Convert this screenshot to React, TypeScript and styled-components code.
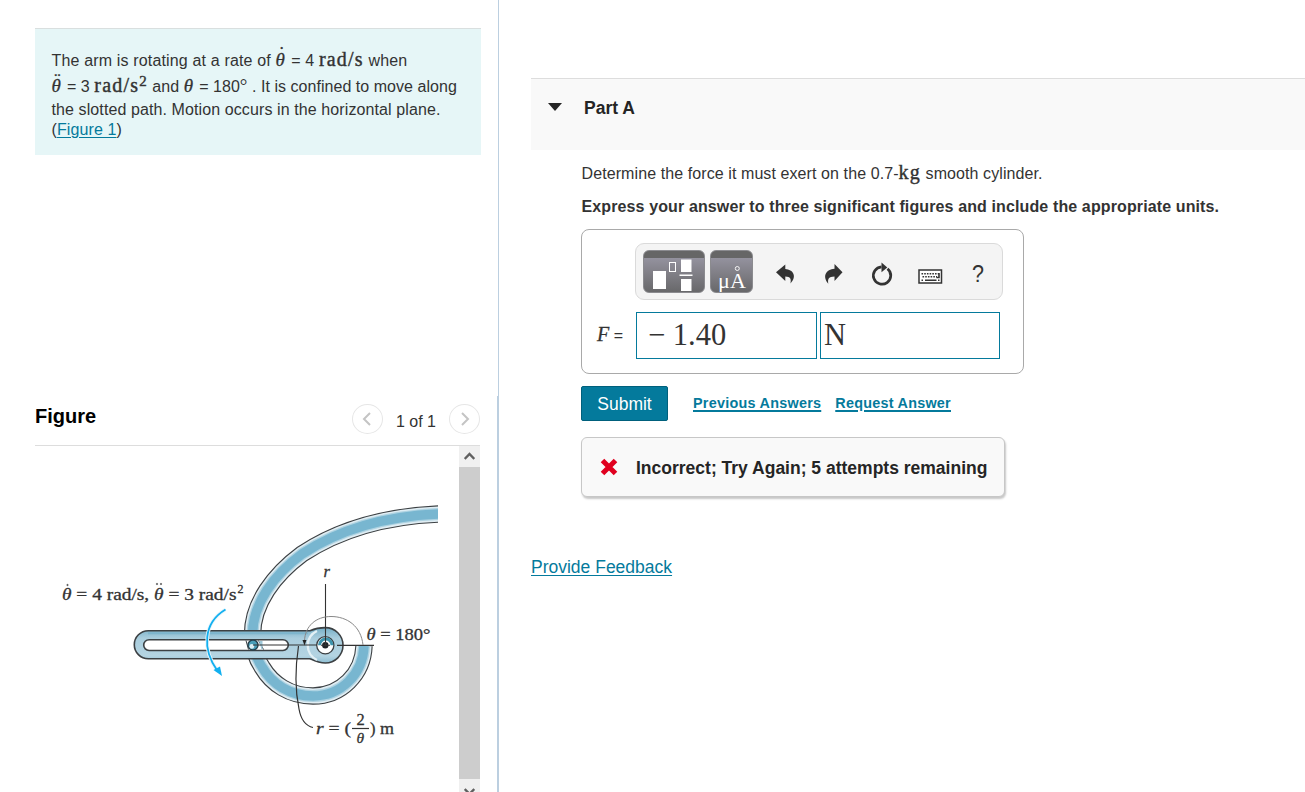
import styled, { createGlobalStyle } from "styled-components";

const GlobalStyle = createGlobalStyle`
    * {
        box-sizing: border-box;
    }

    body {
        margin: 0;
        overflow: hidden;
        background-color: #fff;
        color: #333;
        font-family: "Liberation Sans", Arial, sans-serif;
        font-size: 16px;
    }

    button {
        font-family: inherit;
        cursor: pointer;
    }
`;

const Page = styled.div`
    display: flex;
    width: 100%;
    height: 792px;
    overflow: hidden;
`;

const Sidebar = styled.aside`
    display: flex;
    flex-direction: column;
    justify-content: space-between;
    width: 499px;
    height: 100%;
`;

const ProblemArea = styled.div`
    flex: 0 0 396px;
    padding: 28px 17px 0 35px;
    border-right: 1px solid #bccfe0;
`;

const Problem = styled.div`
    height: 127px;
    padding: 19px 16.5px 0;
    border-top: 1px solid #d9dfdf;
    background-color: #e6f6f7;
`;

const Line = styled.div<{ $height: number; $spacing: number }>`
    height: ${(p) => p.$height}px;
    line-height: ${(p) => p.$height}px;
    letter-spacing: ${(p) => p.$spacing}px;
    white-space: pre;
`;

const Unit = styled.span`
    font-family: "Liberation Serif", "Times New Roman", serif;
    font-size: 20px;
    line-height: 0;
    letter-spacing: 1.2px;
    -webkit-text-stroke: 0.4px currentColor;
`;

const Sup = styled.sup`
    font-size: 15px;
    line-height: 0;
    vertical-align: 6px;
`;

const Degree = styled.span`
    font-family: "Liberation Serif", "Times New Roman", serif;
    font-size: 19px;
    line-height: 0;
`;

const Theta = styled.span<{ $dots?: string }>`
    position: relative;
    display: inline-block;
    width: 10px;
    margin-right: 1px;
    font-family: "Liberation Serif", "Times New Roman", serif;
    font-size: 19px;
    font-style: italic;
    line-height: 1;
    -webkit-text-stroke: 0.3px currentColor;

    &::before {
        content: "${(p) => p.$dots ?? ""}";
        position: absolute;
        top: -6px;
        left: 0;
        width: 12px;
        font-style: normal;
        letter-spacing: 0;
        text-align: center;
    }
`;

const Link = styled.a`
    color: #047a9c;
    text-decoration: underline;
    text-underline-offset: 2px;
`;

const FigureArea = styled.section`
    display: flex;
    flex-direction: column;
    flex: 1;
    min-height: 0;
    padding: 0 17px 0 35px;
    border-right: 2px solid #bccfe0;
`;

const FigureHeader = styled.header`
    display: flex;
    align-items: flex-start;
    justify-content: space-between;
    flex: 0 0 50px;
    border-bottom: 1px solid #ddd;
`;

const FigureTitle = styled.h2`
    margin: 8px 0 0;
    color: #000;
    font-size: 20px;
    line-height: 24px;
`;

const Pager = styled.nav`
    display: flex;
    align-items: center;
    gap: 13px;
    margin-top: 8px;
`;

const PagerText = styled.span`
    padding-top: 5px;
    line-height: 20px;
`;

const PagerButton = styled.button`
    display: flex;
    align-items: center;
    justify-content: center;
    width: 31px;
    height: 30px;
    padding: 0;
    border: 1px solid #e6e6e6;
    border-radius: 50%;
    background-color: #fff;
`;

const FigureBody = styled.div`
    display: flex;
    flex: 1;
    min-height: 0;
    overflow: hidden;
`;

const Scrollbar = styled.div`
    display: flex;
    flex-direction: column;
    width: 21px;
    height: 354px;
    background-color: #f0f0f0;
`;

const ScrollArrow = styled.div`
    display: flex;
    align-items: center;
    justify-content: center;
    flex: 0 0 21px;
`;

const ScrollThumb = styled.div`
    flex: 0 0 312px;
    background-color: #cdcdcd;
`;

const Main = styled.main`
    flex: 1;
    padding: 78px 0 0 32px;
`;

const PartHeader = styled.header`
    display: flex;
    align-items: flex-start;
    gap: 22px;
    height: 72px;
    padding: 18px 0 0 17px;
    border-top: 1px solid #ddd;
    background-color: #f9f9f9;
`;

const Caret = styled.span`
    margin-top: 6px;
    border-top: 8px solid #252525;
    border-right: 7px solid transparent;
    border-left: 7px solid transparent;
`;

const PartTitle = styled.h3`
    margin: 0;
    color: #252525;
    font-size: 17.5px;
    line-height: 22px;
`;

const PartBody = styled.div`
    padding: 0 0 0 50px;
`;

const Question = styled.p`
    height: 20px;
    margin: 14px 0 12px;
    padding-left: 0.5px;
    line-height: 20px;
    letter-spacing: 0.09px;
    white-space: pre;
`;

const Instruction = styled.p`
    margin: 0 0 12px;
    padding-left: 0.5px;
    font-weight: 700;
    line-height: 21px;
    letter-spacing: 0.12px;
    white-space: nowrap;
`;

const AnswerBox = styled.div`
    width: 443px;
    height: 145px;
    padding: 13px 0 0;
    border: 1px solid #a9a9a9;
    border-radius: 8px;
`;

const Toolbar = styled.div`
    display: flex;
    width: 368px;
    height: 57px;
    margin-left: 53px;
    padding: 6px 7px;
    border: 1px solid #dadada;
    border-radius: 9px;
    background-color: #f4f4f4;
`;

const ToolButton = styled.button<{ $width: number }>`
    width: ${(p) => p.$width}px;
    height: 43px;
    margin-right: 5px;
    padding: 0;
    border: 1px solid #8b8b8f;
    border-radius: 6px;
    background: linear-gradient(#666 0, #666 7px, #94929e 7px, #68686a 100%);
    overflow: hidden;

    svg {
        display: block;
    }
`;

const IconRow = styled.div`
    padding: 1px 0 0 12px;
`;

const AnswerRow = styled.div`
    display: flex;
    align-items: center;
    margin-top: 12px;
`;

const AnswerLabel = styled.label`
    width: 54px;
    padding: 0 0 2px 15px;
    line-height: 24px;
    white-space: pre;

    i {
        font-family: "Liberation Serif", "Times New Roman", serif;
        font-size: 20px;
        -webkit-text-stroke: 0.3px currentColor;
    }
`;

const Field = styled.div<{ $width: number; $indent: number }>`
    width: ${(p) => p.$width}px;
    height: 47px;
    margin-right: 3px;
    padding-left: ${(p) => p.$indent}px;
    border: 1px solid #047a9c;
    font-family: "Liberation Serif", "Times New Roman", serif;
    font-size: 30.5px;
    line-height: 45px;
    white-space: pre;
`;

const Actions = styled.div`
    display: flex;
    align-items: center;
    margin-top: 12px;
`;

const Submit = styled.button`
    width: 87px;
    height: 35px;
    margin-right: 25px;
    padding: 1px 0 0;
    border: 1px solid #00607c;
    border-radius: 2px;
    background-color: #047a9c;
    color: #fff;
    font-size: 17.5px;
`;

const ActionLink = styled(Link)`
    margin-right: 14px;
    padding-bottom: 1px;
    font-size: 14.4px;
    font-weight: 700;
    letter-spacing: 0.25px;
    text-decoration-thickness: 2px;
`;

const Feedback = styled.div`
    display: flex;
    align-items: center;
    gap: 18px;
    width: 424px;
    height: 60px;
    margin-top: 16px;
    padding-left: 18px;
    border: 1px solid #c7c7c7;
    border-radius: 6px;
    background-color: #f9f9f9;
    box-shadow: 1px 2px 2px rgba(0, 0, 0, 0.22);
    color: #252525;
    font-size: 17.5px;
    font-weight: 700;
    white-space: nowrap;
`;

const FeedbackText = styled.span`
    padding-top: 3px;
`;

const FooterLink = styled(Link)`
    display: inline-block;
    margin-top: 59px;
    font-size: 17.5px;
    line-height: 22px;
`;

const track =
    "M440 514 C385 516 340 529 302 554 C275 574 252 603 252.5 636 C253 650 256 658 262 667 C272 684 290 696 313 696 C341 696 363 674 364 646";

const trackLayers = [
    { width: 17.4, color: "#3c4043" },
    { width: 15.2, color: "#e0edf3" },
    { width: 12, color: "#aed3e2" },
    { width: 9.4, color: "#78b6d0" },
];

const MechanismDrawing = () => (
    <svg width="424" height="346" viewBox="35 446 424 346">
        <defs>
            <linearGradient id="arm" x1="0" y1="0" x2="0" y2="1">
                <stop offset="0" stopColor="#76afc7" />
                <stop offset="0.3" stopColor="#a9cddd" />
                <stop offset="0.8" stopColor="#b4d4e2" />
                <stop offset="1" stopColor="#8cbdd2" />
            </linearGradient>
            <clipPath id="frame">
                <rect x="35" y="446" width="403" height="346" />
            </clipPath>
        </defs>
        <g fill="none" clipPath="url(#frame)">
            {trackLayers.map((layer) => (
                <path key={layer.width} d={track} stroke={layer.color} strokeWidth={layer.width} />
            ))}
        </g>
        <path
            d="M148.3 630.7 H310 C315 628.5 319 627.6 325.3 627.6 A17.7 17.7 0 0 1 325.3 663 C319 663 315 661 310 658.7 H148.3 A14 14 0 0 1 148.3 630.7 Z"
            fill="url(#arm)"
            stroke="#3c4043"
            strokeWidth="1.6"
        />
        <path d="M148 633.2 H308" stroke="#7db5cc" strokeWidth="2" fill="none" />
        <path d="M317 631 A16 16 0 0 0 317 660" stroke="#e3f0f5" strokeWidth="2.4" fill="none" />
        <rect x="143.7" y="639.7" width="144.6" height="10.8" rx="5.4" fill="#fff" stroke="#3c4043" strokeWidth="1.6" />
        <path d="M246 640.5 l2.5 9 M258.5 640.5 l5 9" stroke="#3c4043" strokeWidth="1" />
        <path d="M259 641 h3.5 v8.5 h-1 z" fill="#9fc8d9" />
        <circle cx="253" cy="645" r="5" fill="#4a9eb8" stroke="#27404c" strokeWidth="1.4" />
        <circle cx="251.8" cy="646.4" r="2.4" fill="#dceef3" />
        <circle cx="325.3" cy="645.3" r="8.6" fill="#fff" stroke="#3c4043" strokeWidth="1.3" />
        <path d="M319.5 645.3 A6 6 0 0 1 332 645.3" stroke="#3d94ad" strokeWidth="3" fill="none" />
        <circle cx="325.3" cy="645.3" r="3.2" fill="#1f2326" />
        <path d="M253 645 H317 M321 645.3 H330 M337 645.4 H374 M325.5 584 V645" stroke="#333" strokeWidth="1.1" fill="none" />
        <path d="M363 645 C361 626 347 616.5 331 616.5 C316 616.5 305 626 304.5 641" stroke="#888" strokeWidth="1" fill="none" />
        <path d="M302.5 640 h4 l-2 5.5 z" fill="#252525" />
        <path d="M298.5 646 C295 669 295 690 299 709 C301 720 306 726 313 727.5" stroke="#333" strokeWidth="1.2" fill="none" />
        <path d="M225.5 609.5 C203 623 202 649 217.5 671" stroke="#e8f5fb" strokeWidth="3.6" fill="none" />
        <path d="M225.5 609.5 C203 623 202 649 217.5 671" stroke="#12b0f0" strokeWidth="1.8" fill="none" />
        <path d="M213.5 670 L220 666.5 L222 676 Z" fill="#12b0f0" />
        <g fill="#333" stroke="#333" strokeWidth="0.3" fontFamily="'Liberation Serif', serif" fontSize="16.5">
            <text x="62" y="599.5" textLength="174.5" lengthAdjust="spacingAndGlyphs">
                <tspan fontStyle="italic">θ</tspan> = 4 rad/s, <tspan fontStyle="italic">θ</tspan> = 3 rad/s
            </text>
            <text x="237.5" y="592.5" fontSize="12">2</text>
            <circle cx="67.5" cy="585" r="0.8" />
            <circle cx="157" cy="584" r="0.8" />
            <circle cx="161" cy="584" r="0.8" />
            <text x="323.5" y="577" fontStyle="italic">r</text>
            <text x="366.5" y="639.5" textLength="64" lengthAdjust="spacingAndGlyphs">
                <tspan fontStyle="italic">θ</tspan> = 180°
            </text>
            <text x="316" y="733.5" textLength="35" lengthAdjust="spacingAndGlyphs">
                <tspan fontStyle="italic">r</tspan> = (
            </text>
            <text x="356.5" y="725">2</text>
            <path d="M352 728.5 H369" strokeWidth="1.2" />
            <text x="356.5" y="743" fontSize="15.5" fontStyle="italic">θ</text>
            <text x="370" y="733.5">)</text>
            <text x="380" y="733.5" textLength="14" lengthAdjust="spacingAndGlyphs">m</text>
        </g>
    </svg>
);

const TemplateIcon = () => (
    <svg width="60" height="41" viewBox="644 251 60 41">
        <path d="M653 271 h13 v18 h-13 z M681 259.5 h10.5 v12.5 h-10.5 z M681 279 h10.5 v12 h-10.5 z M679.5 274.5 h13 v1.5 h-13 z" fill="#fff" />
        <rect x="669.5" y="262.5" width="6" height="9" fill="none" stroke="#fff" />
    </svg>
);

const UnitsIcon = () => (
    <svg width="41" height="41" viewBox="711 251 41 41">
        <g fill="#fff" fontFamily="'Liberation Serif', serif" fontSize="22">
            <text x="718" y="288">μ</text>
            <text x="730" y="288">A</text>
        </g>
        <circle cx="737.3" cy="268.5" r="2" fill="none" stroke="#fff" strokeWidth="0.9" />
    </svg>
);

const ToolIcons = () => (
    <svg width="220" height="42" viewBox="770 251 220 42">
        <g fill="#333">
            <path d="M776 272.3 L785.3 264.5 V269 C793 269.5 797.5 276 790.5 283.5 C791.3 278.5 790.5 276.6 785.3 276.4 V281 Z" />
            <path d="M842.5 272.3 L834.5 264 V268.7 C826 269.5 822 276 828.3 283.7 C827.5 278.5 828.8 276.6 834.5 276.4 V281 Z" />
            <path d="M881.5 262.5 L887.3 267.5 L881.5 272.3 Z" />
        </g>
        <path d="M887.5 268.7 A8.7 8.7 0 1 1 881.5 266.8" fill="none" stroke="#333" strokeWidth="2.7" />
        <rect x="919" y="270" width="22.5" height="13" fill="#fff" stroke="#333" strokeWidth="1.5" />
        <path d="M921.5 273.7 H939 M922.5 276.7 H937" stroke="#333" strokeWidth="1.6" strokeDasharray="1.6 1.1" />
        <path d="M939 273 V277.5 H936.5 M925 280.2 H936.5 M921.5 280.2 h1.5 M938 280.2 h1.5" fill="none" stroke="#333" strokeWidth="1.6" />
        <text x="972" y="282" fill="#333" fontFamily="'Liberation Sans', sans-serif" fontSize="23" textLength="12" lengthAdjust="spacingAndGlyphs">?</text>
    </svg>
);

const App = () => {
    return (
        <>
            <GlobalStyle />
            <Page>
                <Sidebar>
                    <ProblemArea>
                        <Problem>
                            <Line $height={26} $spacing={0.16}>
                                The arm is rotating at a rate of <Theta $dots="˙">θ</Theta> = 4 <Unit>rad/s</Unit> when
                            </Line>
                            <Line $height={26} $spacing={0.04}>
                                <Theta $dots="¨">θ</Theta> = 3 <Unit>rad/s<Sup>2</Sup></Unit> and <Theta>θ</Theta> = 180<Degree>°</Degree> . It is confined to move along
                            </Line>
                            <Line $height={20} $spacing={0.1}>the slotted path. Motion occurs in the horizontal plane.</Line>
                            <Line $height={20} $spacing={0.1}>
                                (<Link>Figure 1</Link>)
                            </Line>
                        </Problem>
                    </ProblemArea>
                    <FigureArea>
                        <FigureHeader>
                            <FigureTitle>Figure</FigureTitle>
                            <Pager>
                                <PagerButton aria-label="Previous figure">
                                    <svg width="10" height="14" fill="none" stroke="#c4c4c4" strokeWidth="2">
                                        <path d="M8 1 L2 7 L8 13" />
                                    </svg>
                                </PagerButton>
                                <PagerText>1 of 1</PagerText>
                                <PagerButton aria-label="Next figure">
                                    <svg width="10" height="14" fill="none" stroke="#c4c4c4" strokeWidth="2">
                                        <path d="M2 1 L8 7 L2 13" />
                                    </svg>
                                </PagerButton>
                            </Pager>
                        </FigureHeader>
                        <FigureBody>
                            <MechanismDrawing />
                            <Scrollbar>
                                <ScrollArrow>
                                    <svg width="11" height="9" fill="none" stroke="#606060" strokeWidth="2.4">
                                        <path d="M0.7 7 L5.5 2 L10.3 7" />
                                    </svg>
                                </ScrollArrow>
                                <ScrollThumb />
                                <ScrollArrow>
                                    <svg width="11" height="9" fill="none" stroke="#606060" strokeWidth="2.4">
                                        <path d="M0.7 4 L5.5 9 L10.3 4" />
                                    </svg>
                                </ScrollArrow>
                            </Scrollbar>
                        </FigureBody>
                    </FigureArea>
                </Sidebar>
                <Main>
                    <PartHeader>
                        <Caret />
                        <PartTitle>Part A</PartTitle>
                    </PartHeader>
                    <PartBody>
                        <Question>
                            Determine the force it must exert on the 0.7-<Unit>kg</Unit> smooth cylinder.
                        </Question>
                        <Instruction>
                            Express your answer to three significant figures and include the appropriate units.
                        </Instruction>
                        <AnswerBox>
                            <Toolbar>
                                <ToolButton $width={62} aria-label="Templates">
                                    <TemplateIcon />
                                </ToolButton>
                                <ToolButton $width={43} aria-label="Units">
                                    <UnitsIcon />
                                </ToolButton>
                                <IconRow>
                                    <ToolIcons />
                                </IconRow>
                            </Toolbar>
                            <AnswerRow>
                                <AnswerLabel>
                                    <i>F</i> =
                                </AnswerLabel>
                                <Field $width={181} $indent={11}>− 1.40</Field>
                                <Field $width={180} $indent={3}>N</Field>
                            </AnswerRow>
                        </AnswerBox>
                        <Actions>
                            <Submit>Submit</Submit>
                            <ActionLink>Previous Answers</ActionLink>
                            <ActionLink>Request Answer</ActionLink>
                        </Actions>
                        <Feedback>
                            <svg width="18" height="18" stroke="#e0001f" strokeWidth="5">
                                <path d="M2.5 2.5 L15.5 15.5 M15.5 2.5 L2.5 15.5" />
                            </svg>
                            <FeedbackText>Incorrect; Try Again; 5 attempts remaining</FeedbackText>
                        </Feedback>
                    </PartBody>
                    <FooterLink>Provide Feedback</FooterLink>
                </Main>
            </Page>
        </>
    );
};

export default App;
